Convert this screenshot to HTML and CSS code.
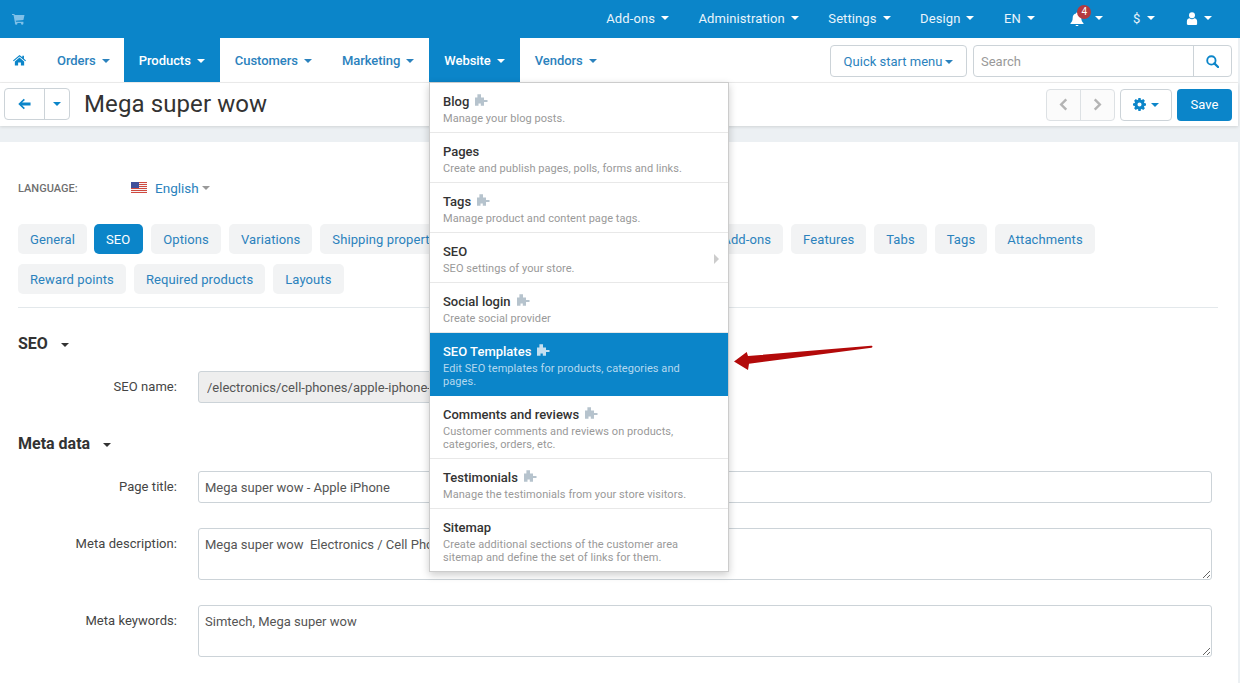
FILE: index.html
```html
<!DOCTYPE html>
<html lang="en">
<head>
<meta charset="utf-8">
<title>Mega super wow</title>
<link rel="stylesheet" href="styles.css">
</head>
<body>
<svg class="defs" width="0" height="0" aria-hidden="true">
  <symbol id="puzzle" viewBox="0 0 14 14"><path d="M1 4.500h2.400V1.200h3.600v3.300H10V7h3.500v2H10v3.800H6.800V10.600H4.500v2.200H1z"/></symbol>
</svg>
<header class="topbar">
  <svg class="cart" viewBox="0 0 14 13" width="13" height="12"><path d="M0 1h2.500l.4 1.300H13.500L12.300 7.500 4 8.300l.3 1.200h8v1.200H3.200L1.600 2.200H0z"/><circle cx="4.500" cy="11.500" r="1.300"/><circle cx="11" cy="11.500" r="1.300"/></svg>
  <nav class="topmenu">
    <a class="topitem">Add-ons<i class="caret"></i></a>
    <a class="topitem">Administration<i class="caret"></i></a>
    <a class="topitem">Settings<i class="caret"></i></a>
    <a class="topitem">Design<i class="caret"></i></a>
    <a class="topitem">EN<i class="caret"></i></a>
    <a class="topitem bellitem">
      <svg class="bell" viewBox="0 0 14 14" width="14" height="14" fill="#fff"><path d="M7 0.500c.6 0 1 .4 1 1 2.200.4 3.300 2.200 3.300 4.300 0 3 1 4.200 2.200 5.400v.8H.5v-.8c1.200-1.200 2.200-2.400 2.200-5.400C2.700 3.700 3.800 1.900 6 1.500c0-.6.400-1 1-1zM5.500 13h3c0 .8-.7 1.200-1.500 1.200S5.500 13.800 5.500 13z"/></svg>
      <span class="badge">4</span><i class="caret"></i>
    </a>
    <a class="topitem">$<i class="caret"></i></a>
    <a class="topitem useritem">
      <svg viewBox="0 0 12 14" width="12" height="13" fill="#fff"><circle cx="6" cy="3.500" r="3.200"/><path d="M0.500 13v-3C.5 8 2 6.800 3.500 6.800 4.200 7.400 5 7.700 6 7.700s1.800-.3 2.500-.9C10 6.800 11.500 8 11.500 10v3c0 .6-.5 1-1 1h-9c-.5 0-1-.4-1-1z"/></svg>
      <i class="caret"></i>
    </a>
  </nav>
</header>

<div class="page">
  <nav class="mainnav">
    <a class="navhome"><svg viewBox="0 0 14 12" width="13" height="12" fill="#0b85c9"><path d="M7 .5 10 3V1.500h1.800v3.100L14 6.500l-.8.800L7 2.200.8 7.300 0 6.500zM2 7.600 7 3.400l5 4.200V12H8.500V8.800h-3V12H2z"/></svg></a>
    <a class="navitem">Orders<i class="caret"></i></a>
    <a class="navitem active">Products<i class="caret"></i></a>
    <a class="navitem">Customers<i class="caret"></i></a>
    <a class="navitem">Marketing<i class="caret"></i></a>
    <a class="navitem active">Website<i class="caret"></i></a>
    <a class="navitem">Vendors<i class="caret"></i></a>
    <div class="navtools">
      <button class="qs">Quick start menu<i class="caret small"></i></button>
      <div class="searchbox">
        <span class="searchtext">Search</span>
        <span class="searchbtn"><svg viewBox="0 0 14 14" width="13" height="13" fill="none" stroke="#0b85c9" stroke-width="2"><circle cx="5.800" cy="5.800" r="4.500"/><path d="M9 9l4 4" stroke-width="2.400" stroke-linecap="round"/></svg></span>
      </div>
    </div>
  </nav>

  <div class="toolbar">
    <div class="btngroup">
      <span class="gbtn backbtn"><svg viewBox="0 0 14 12" width="13" height="12" fill="#0b85c9"><path d="M6.200.3 7.500 1.600 4.400 4.500H13.500v3H4.400l3.100 2.900-1.300 1.300L.3 6z"/></svg></span>
      <span class="gbtn dropbtn"><i class="caret blue"></i></span>
    </div>
    <h1 class="title">Mega super wow</h1>
    <div class="actions">
      <div class="pager">
        <span class="pagebtn"><svg viewBox="0 0 9 14" width="9" height="13" fill="none" stroke="#b4b4b4" stroke-width="2.600"><path d="M7.500 1.500 2 7l5.500 5.500"/></svg></span>
        <span class="pagebtn"><svg viewBox="0 0 9 14" width="9" height="13" fill="none" stroke="#b4b4b4" stroke-width="2.600"><path d="M1.500 1.500 7 7l-5.500 5.500"/></svg></span>
      </div>
      <span class="gearbtn">
        <svg viewBox="0 0 14 14" width="13" height="13"><path fill="#0b85c9" fill-rule="evenodd" d="M5.800 0h2.400l.3 1.800 1 .4L11 1.200l1.800 1.800-1 1.500.4 1 1.800.3v2.400l-1.800.3-.4 1 1 1.500L11 12.800l-1.500-1-1 .4-.3 1.800H5.800l-.3-1.800-1-.4-1.500 1L1.200 11l1-1.500-.4-1L0 8.200V5.800l1.800-.3.4-1-1-1.500L3 1.200l1.500 1 1-.4zM7 4.800a2.200 2.200 0 1 0 0 4.400 2.200 2.200 0 0 0 0-4.400z"/></svg>
        <i class="caret blue"></i>
      </span>
      <button class="save">Save</button>
    </div>
  </div>

  <div class="band"></div>

  <main class="content">
    <div class="langrow">
      <span class="langlabel">LANGUAGE:</span>
      <svg class="flag" viewBox="0 0 16 11" width="16" height="11">
        <rect width="16" height="11" fill="#f4f4f6"/>
        <path d="M0 0h16v1H0zM0 2h16v1H0zM0 4h16v1H0zM0 6h16v1H0zM0 8h16v1H0zM0 10h16v1H0z" fill="#d0493f"/>
        <rect width="8" height="6" fill="#3f4f9a"/>
      </svg>
      <a class="langname">English</a><i class="caret gray"></i>
    </div>

    <div class="tabs">
      <a class="tab">General</a>
      <a class="tab current">SEO</a>
      <a class="tab">Options</a>
      <a class="tab">Variations</a>
      <a class="tab">Shipping properties</a>
      <a class="tab">Quantity discounts</a>
      <a class="tab">Subscribers</a>
      <a class="tab">Add-ons</a>
      <a class="tab">Features</a>
      <a class="tab">Tabs</a>
      <a class="tab">Tags</a>
      <a class="tab">Attachments</a>
      <a class="tab">Reward points</a>
      <a class="tab">Required products</a>
      <a class="tab">Layouts</a>
    </div>

    <h2 class="section first">SEO<i class="caret dark"></i></h2>
    <div class="field seoname">
      <label class="flabel">SEO name:</label>
      <input class="finput readonly" value="/electronics/cell-phones/apple-iphone-4s-black/" readonly>
    </div>

    <h2 class="section">Meta data<i class="caret dark"></i></h2>
    <div class="field">
      <label class="flabel">Page title:</label>
      <input class="finput" value="Mega super wow - Apple iPhone">
    </div>
    <div class="field">
      <label class="flabel">Meta description:</label>
      <textarea class="finput area">Mega super wow  Electronics / Cell Phones / Apple iPhone</textarea>
    </div>
    <div class="field">
      <label class="flabel">Meta keywords:</label>
      <textarea class="finput area">Simtech, Mega super wow</textarea>
    </div>
  </main>
</div>

<div class="dropdown">
  <a class="ditem"><b class="dtitle">Blog<svg class="pz"><use href="#puzzle"/></svg></b><span class="ddesc">Manage your blog posts.</span></a>
  <a class="ditem"><b class="dtitle">Pages</b><span class="ddesc">Create and publish pages, polls, forms and links.</span></a>
  <a class="ditem"><b class="dtitle">Tags<svg class="pz"><use href="#puzzle"/></svg></b><span class="ddesc">Manage product and content page tags.</span></a>
  <a class="ditem sub"><b class="dtitle">SEO</b><span class="ddesc">SEO settings of your store.</span></a>
  <a class="ditem"><b class="dtitle">Social login<svg class="pz"><use href="#puzzle"/></svg></b><span class="ddesc">Create social provider</span></a>
  <a class="ditem hot"><b class="dtitle">SEO Templates<svg class="pz"><use href="#puzzle"/></svg></b><span class="ddesc">Edit SEO templates for products, categories and pages.</span></a>
  <a class="ditem"><b class="dtitle">Comments and reviews<svg class="pz"><use href="#puzzle"/></svg></b><span class="ddesc">Customer comments and reviews on products, categories, orders, etc.</span></a>
  <a class="ditem"><b class="dtitle">Testimonials<svg class="pz"><use href="#puzzle"/></svg></b><span class="ddesc">Manage the testimonials from your store visitors.</span></a>
  <a class="ditem"><b class="dtitle">Sitemap</b><span class="ddesc">Create additional sections of the customer area sitemap and define the set of links for them.</span></a>
</div>

<svg class="arrow" viewBox="0 0 142 28" width="142" height="28"><path fill="#b30a0a" d="M1 16.500 13.700 7 15 11 138 .8c1.700-.2 2 1.600.5 2L16 18.800 15 25z"/></svg>
</body>
</html>
```

FILE: styles.css
```css
* { box-sizing: border-box; }
html, body { margin: 0; height: 683px; overflow: hidden; }
body { font-family: Roboto, "Liberation Sans", sans-serif; font-size: 13px; color: #333; background: #ecf0f3; position: relative; }
a { color: inherit; text-decoration: none; }
.defs { position: absolute; }

.caret { display: inline-block; width: 0; height: 0; border-left: 4px solid transparent; border-right: 4px solid transparent; border-top: 4px solid currentColor; margin-left: 6px; vertical-align: 2px; }
.caret.small { margin-left: 3px; }
.caret.blue { color: #0b85c9; margin-left: 0; }
.caret.gray { color: #999; margin-left: 3px; }
.caret.dark { color: #333; margin-left: 13px; vertical-align: 2px; }

.topbar { height: 38px; background: #0b85c9; display: flex; align-items: center; justify-content: space-between; color: #fff; }
.cart { fill: #7fc0e8; margin-left: 12px; }
.topmenu { display: flex; align-items: center; padding: 0 13px 2px 0; }
.topitem { display: flex; align-items: center; padding: 0 14.750px; color: #e9f4fb; white-space: nowrap; letter-spacing: .1px; position: relative; }
.topitem .caret { color: #fff; vertical-align: 0; }
.bell { margin-top: 2px; }
.bellitem { padding-left: 20.750px; padding-right: 15px; }
.bellitem .caret { margin-left: 11px; }
.useritem { padding-left: 17px; }
.badge { position: absolute; left: 27.750px; top: -5px; width: 14px; height: 14px; border-radius: 50%; background: #b43a3f; color: #fff; font-size: 10px; line-height: 14px; text-align: center; }

.page { padding-right: 2px; }
.mainnav { height: 45px; background: #fff; display: flex; align-items: flex-start; border-bottom: 1px solid #eee; }
.navhome { width: 42px; height: 44px; padding: 16px 0 0 13px; }
.navitem { height: 44px; line-height: 46px; padding: 0 15px; color: #2b82bd; font-weight: 500; letter-spacing: -.05px; white-space: nowrap; }
.navitem:nth-child(2) { padding-right: 14px; }
.navitem.active { background: #0b85c9; color: #fff; }
.navtools { margin-left: auto; display: flex; gap: 6px; padding: 7px 6px 0 0; }
.qs { height: 32px; width: 137px; background: #fff; border: 1px solid #ccd3d8; border-radius: 4px; color: #2b82bd; font: 13px Roboto, sans-serif; padding: 0; }
.searchbox { width: 259px; height: 32px; border: 1px solid #ccd3d8; border-radius: 4px; display: flex; align-items: center; justify-content: space-between; }
.searchtext { color: #999; padding-left: 7px; }
.searchbtn { width: 38px; height: 30px; border-left: 1px solid #ccd3d8; display: flex; align-items: center; justify-content: center; }

.toolbar { height: 43px; background: #fff; display: flex; align-items: center; padding: 0 6px 0 4px; box-shadow: 0 1px 3px rgba(0,0,0,.12); position: relative; }
.btngroup { display: flex; height: 32px; border: 1px solid #ccd3d8; border-radius: 4px; margin-bottom: 1px; }
.gbtn { display: flex; align-items: center; justify-content: center; }
.backbtn { width: 40px; border-right: 1px solid #ccd3d8; }
.dropbtn { width: 24px; }
.title { font-size: 24px; font-weight: 400; margin: 0 0 2px 14px; color: #333; line-height: 32px; letter-spacing: .1px; }
.actions { margin-left: auto; display: flex; gap: 5px; align-items: center; }
.pager { display: flex; height: 32px; width: 69px; border: 1px solid #dde1e4; border-radius: 4px; background: #fbfbfb; }
.pagebtn { flex: 1; display: flex; align-items: center; justify-content: center; }
.pagebtn + .pagebtn { border-left: 1px solid #dde1e4; }
.gearbtn { height: 32px; width: 52px; border: 1px solid #ccd3d8; border-radius: 4px; display: flex; align-items: center; justify-content: center; gap: 5px; }
.save { height: 32px; width: 55px; border: 0; border-radius: 4px; background: #0b85c9; color: #fff; font: 13px Roboto, sans-serif; padding: 0; }

.band { height: 16px; background: #ecf0f3; }

.content { background: #fff; height: 541px; padding: 0 20px 0 18px; }
.langrow { display: flex; align-items: center; height: 92px; }
.langlabel { width: 113px; font-size: 11px; font-weight: 500; color: #6f6f6f; }
.flag { margin-right: 8px; margin-top: -2px; }
.langname { color: #2b82bd; font-size: 13.500px; }

.tabs { display: flex; flex-wrap: wrap; gap: 10px 8px; padding: 0 30px 13px 0; border-bottom: 1px solid #e3e8eb; margin-top: -10px; }
.tab { height: 30px; line-height: 31px; padding: 0 12px; background: #f2f3f4; color: #2b82bd; border-radius: 5px; white-space: nowrap; letter-spacing: .1px; }
.tab.current { background: #0b85c9; color: #fff; margin-left: -1px; padding-right: 13px; }

.section { font-size: 16px; font-weight: 700; margin: 0; height: 22px; line-height: 22px; color: #333; }
.section.first { margin-top: 25px; margin-bottom: 16px; }
.section:not(.first) { margin-top: 30px; margin-bottom: 16px; }

.field { display: flex; align-items: flex-start; margin-bottom: 25px; }
.seoname { margin-bottom: 0; }
.flabel { width: 159px; text-align: right; padding-top: 8px; margin-right: 21px; color: #444; flex: none; letter-spacing: .05px; }
.finput { width: 1014px; height: 32px; border: 1px solid #ccd3d8; border-radius: 3px; padding: 0 6px; font: 13px Roboto, sans-serif; color: #555; background: #fff; outline: none; display: block; }
.readonly { background: #eee; padding-left: 8px; width: 400px; }
.area { height: 52px; padding-top: 8px; resize: vertical; line-height: 16px; }

.dropdown { position: absolute; left: 429px; top: 82px; width: 300px; background: #fff; border: 1px solid #ccc; box-shadow: 0 3px 8px rgba(0,0,0,.2); }
.ditem { display: block; padding: 10px 13px 7px; border-bottom: 1px solid #e8e8e8; position: relative; }
.ditem:last-child { border-bottom: 0; }
.dtitle { display: block; font-size: 13px; font-weight: 500; line-height: 18px; color: #333; }
.ddesc { display: block; font-size: 11px; line-height: 13px; color: #999; margin-top: 1px; padding-right: 20px; letter-spacing: .07px; }
.pz { width: 14px; height: 14px; margin-left: 5px; fill: #b6c3cd; vertical-align: -1px; }
.ditem.sub::after { content: ""; position: absolute; right: 9px; top: 21px; border-left: 5px solid #ccc; border-top: 5px solid transparent; border-bottom: 5px solid transparent; }
.ditem.hot { background: #0b85c9; border-bottom-color: #0b85c9; }
.hot .dtitle { color: #fff; }
.hot .ddesc { color: #b5d9ef; }
.hot .pz { fill: #c5dff0; }

.arrow { position: absolute; left: 733px; top: 345px; }
```
